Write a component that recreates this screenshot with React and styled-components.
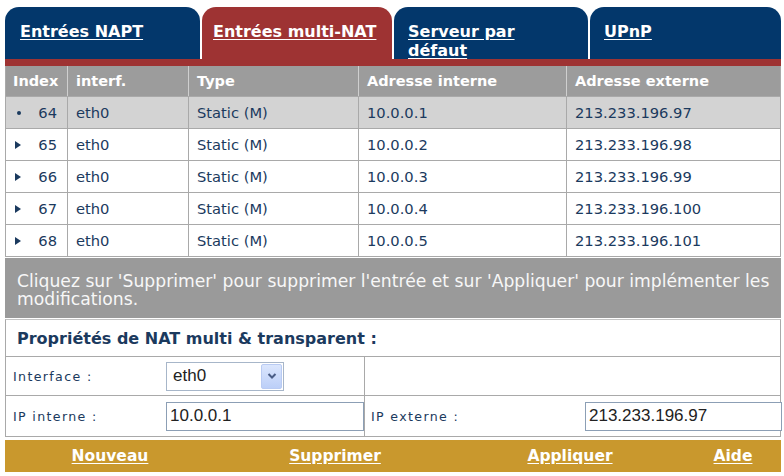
import React from "react";
import styled, { createGlobalStyle } from "styled-components";

const NAVY = "#03376b";
const RED = "#9e3333";
const TEXT = "#1b3a5e";
const LINE = "#a9a9a9";

const GlobalStyle = createGlobalStyle`
  html, body { margin: 0; padding: 0; background: #fff; }
  body { font-family: "DejaVu Sans", Verdana, sans-serif; }
  * { box-sizing: border-box; }
`;

const Page = styled.div`
  width: 784px;
  padding: 7px 3px 0 5px;
`;

const TabBar = styled.div`
  display: flex;
  gap: 2px;
  height: 52px;
`;

const Tab = styled.div`
  width: ${(p) => p.$w}px;
  background: ${(p) => (p.$active ? RED : NAVY)};
  border-radius: 14px 14px 0 0;
  padding: 15px 0 0 ${(p) => p.$pl}px;
`;

const TabLink = styled.a`
  color: #fff;
  font-weight: bold;
  font-size: 16px;
  line-height: 19px;
  text-decoration: underline;
  text-underline-offset: 2px;
  cursor: pointer;
`;

const RedStrip = styled.div`
  height: 7px;
  background: ${RED};
`;

const COLS = "62px 121px 170px 208px 214px";

const Row = styled.div`
  display: grid;
  grid-template-columns: ${COLS};
  width: 776px;
  height: ${(p) => (p.$head ? 31 : 32)}px;
  border-left: 1px solid ${LINE};
  border-bottom: 1px solid ${LINE};
  background: ${(p) => (p.$head ? "#9c9c9c" : p.$selected ? "#d3d3d3" : "#fff")};
  color: ${(p) => (p.$head ? "#fff" : TEXT)};
  font-size: ${(p) => (p.$head ? "14.5px" : "14.7px")};
  font-weight: ${(p) => (p.$head ? "bold" : "normal")};
`;

const Cell = styled.div`
  display: flex;
  align-items: center;
  padding-left: ${(p) => p.$pl ?? 8}px;
  border-right: 1px solid ${(p) => (p.$head ? "#cfcfcf" : LINE)};
  white-space: nowrap;
  &:last-child { border-right-color: ${LINE}; }
`;

const IndexCell = styled(Cell)`
  justify-content: space-between;
  padding: 0 10px 0 9px;
`;

const Arrow = styled.span`
  width: 0;
  height: 0;
  border-top: 4px solid transparent;
  border-bottom: 4px solid transparent;
  border-left: 6px solid ${TEXT};
`;

const Dot = styled.span`
  width: 4px;
  height: 4px;
  margin-left: 2px;
  border-radius: 50%;
  background: ${TEXT};
`;

const Message = styled.div`
  margin-top: 1px;
  height: 60px;
  background: #9a9a9a;
  color: #f7f7f7;
  font-size: 17.2px;
  line-height: 18px;
  padding: 14px 8px 0 12px;
`;

const FormBox = styled.div`
  margin-top: 1px;
  border-top: 1px solid #c4c4c4;
  border-left: 1px solid ${LINE};
  border-right: 1px solid ${LINE};
  width: 776px;
`;

const FormTitle = styled.div`
  height: 37px;
  display: flex;
  align-items: center;
  padding-left: 11px;
  border-bottom: 1px solid ${LINE};
  color: ${TEXT};
  font-weight: bold;
  font-size: 16px;
`;

const FormRow = styled.div`
  display: grid;
  grid-template-columns: 155px 204px 215px 1fr;
  height: ${(p) => p.$h}px;
  border-bottom: 1px solid ${LINE};
`;

const FormCell = styled.div`
  display: flex;
  align-items: center;
  padding-left: ${(p) => p.$pl ?? 7}px;
  border-right: ${(p) => (p.$divider ? `1px solid ${LINE}` : "none")};
  grid-column: ${(p) => p.$span ?? "auto"};
`;

const Label = styled.span`
  color: ${TEXT};
  font-size: 12.6px;
  letter-spacing: 1.35px;
`;

const TextInput = styled.input`
  width: ${(p) => p.$w}px;
  height: 29px;
  border: 1px solid #8c9fb5;
  font-family: "Liberation Sans", Arial, sans-serif;
  font-size: 17px;
  color: #222;
  padding: 0 0 0 3px;
  outline: none;
  background: #fff;
`;

const SelectBox = styled.div`
  width: 118px;
  height: 29px;
  border: 1px solid #a7b6c9;
  display: flex;
  align-items: center;
  justify-content: space-between;
  padding: 1px 1px 1px 6px;
  font-family: "Liberation Sans", Arial, sans-serif;
  font-size: 17px;
  color: #222;
  background: #fff;
`;

const DropButton = styled.div`
  width: 21px;
  height: 100%;
  border: 1px solid #b9cbf3;
  border-radius: 2px;
  background: linear-gradient(#dbe6fd, #bccff8);
  display: flex;
  align-items: center;
  justify-content: center;
`;

const Footer = styled.div`
  margin-top: 3px;
  height: 32px;
  width: 776px;
  background: #c9982d;
  display: grid;
  grid-template-columns: 210px 240px 230px 96px;
  align-items: center;
`;

const FooterLink = styled.a`
  justify-self: center;
  color: #fff;
  font-weight: bold;
  font-size: 15.5px;
  text-decoration: underline;
  text-underline-offset: 2px;
  cursor: pointer;
`;

const rows = [
  { idx: 64, itf: "eth0", type: "Static (M)", inn: "10.0.0.1", ext: "213.233.196.97", sel: true },
  { idx: 65, itf: "eth0", type: "Static (M)", inn: "10.0.0.2", ext: "213.233.196.98" },
  { idx: 66, itf: "eth0", type: "Static (M)", inn: "10.0.0.3", ext: "213.233.196.99" },
  { idx: 67, itf: "eth0", type: "Static (M)", inn: "10.0.0.4", ext: "213.233.196.100" },
  { idx: 68, itf: "eth0", type: "Static (M)", inn: "10.0.0.5", ext: "213.233.196.101" },
];

export default function App() {
  return (
    <>
      <GlobalStyle />
      <Page>
        <TabBar>
          <Tab $w={195} $pl={15}><TabLink>Entrées NAPT</TabLink></Tab>
          <Tab $w={190} $pl={11} $active><TabLink>Entrées multi-NAT</TabLink></Tab>
          <Tab $w={194} $pl={14}><TabLink>Serveur par<br />défaut</TabLink></Tab>
          <Tab $w={191} $pl={14}><TabLink>UPnP</TabLink></Tab>
        </TabBar>
        <RedStrip />
        <Row $head>
          <Cell $head $pl={7}>Index</Cell>
          <Cell $head>interf.</Cell>
          <Cell $head>Type</Cell>
          <Cell $head>Adresse interne</Cell>
          <Cell $head>Adresse externe</Cell>
        </Row>
        {rows.map((r) => (
          <Row key={r.idx} $selected={r.sel}>
            <IndexCell>
              {r.sel ? <Dot /> : <Arrow />}
              <span>{r.idx}</span>
            </IndexCell>
            <Cell>{r.itf}</Cell>
            <Cell>{r.type}</Cell>
            <Cell>{r.inn}</Cell>
            <Cell>{r.ext}</Cell>
          </Row>
        ))}
        <Message>
          Cliquez sur 'Supprimer' pour supprimer l'entrée et sur 'Appliquer' pour implémenter les modifications.
        </Message>
        <FormBox>
          <FormTitle>Propriétés de NAT multi &amp; transparent :</FormTitle>
          <FormRow $h={39}>
            <FormCell><Label>Interface :</Label></FormCell>
            <FormCell $pl={5} $divider>
              <SelectBox>
                <span>eth0</span>
                <DropButton>
                  <svg width="10" height="8" viewBox="0 0 10 8">
                    <path d="M1.5 2 L5 5.5 L8.5 2" fill="none" stroke="#4a5d86" strokeWidth="2" />
                  </svg>
                </DropButton>
              </SelectBox>
            </FormCell>
            <FormCell $span="span 2" />
          </FormRow>
          <FormRow $h={41}>
            <FormCell><Label>IP interne :</Label></FormCell>
            <FormCell $pl={5} $divider>
              <TextInput $w={198} value="10.0.0.1" readOnly />
            </FormCell>
            <FormCell $pl={6}><Label>IP externe :</Label></FormCell>
            <FormCell $pl={5}>
              <TextInput $w={197} value="213.233.196.97" readOnly />
            </FormCell>
          </FormRow>
        </FormBox>
        <Footer>
          <FooterLink>Nouveau</FooterLink>
          <FooterLink>Supprimer</FooterLink>
          <FooterLink>Appliquer</FooterLink>
          <FooterLink>Aide</FooterLink>
        </Footer>
      </Page>
    </>
  );
}
